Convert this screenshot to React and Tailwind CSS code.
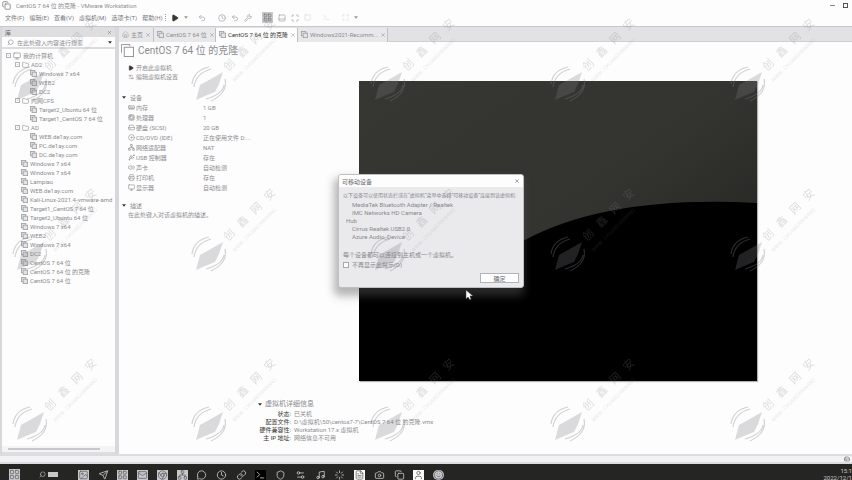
import React from "react";
import {
  Search, Monitor, Copy, Play, Clock, Undo2, Wrench, Square, Maximize, Cpu, HardDrive, Disc,
  Network, Usb, Volume2, Printer, Settings2, MemoryStick, X, House, Folder, Shield, Mail,
  MessageCircle, Image, Terminal, Chrome, Music, LayoutGrid, Camera, User, Smile, Loader,
  FileText, Send, PanelBottom, Link,
} from "lucide-react";

const tree = [
  ["root", "我的计算机"],
  ["folder", "AD2"],
  ["child", "Windows 7 x64"],
  ["child", "WEB2"],
  ["child", "DC2"],
  ["folder", "内网CFS"],
  ["child", "Target2_Ubuntu 64 位"],
  ["child", "Target1_CentOS 7 64 位"],
  ["folder", "AD"],
  ["child", "WEB.de1ay.com"],
  ["child", "PC.de1ay.com"],
  ["child", "DC.de1ay.com"],
  ["vm", "Windows 7 x64"],
  ["vm", "Windows 7 x64"],
  ["vm", "Lampiao"],
  ["vm", "WEB.de1ay.com"],
  ["vm", "Kali-Linux-2021.4-vmware-amd"],
  ["vm", "Target1_CentOS 7 64 位"],
  ["vm", "Target2_Ubuntu 64 位"],
  ["vm", "Windows 7 x64"],
  ["vm", "WEB2"],
  ["vm", "Windows 7 x64"],
  ["vm", "DC2"],
  ["vm", "CentOS 7 64 位"],
  ["vm", "CentOS 7 64 位 的克隆"],
  ["vm", "CentOS 7 64 位"],
];

const indent = { root: "pl-[4px]", folder: "pl-[13px]", child: "pl-[28px]", vm: "pl-[19px]" };

const devices = [
  [MemoryStick, "内存", "1 GB"],
  [Cpu, "处理器", "1"],
  [HardDrive, "硬盘 (SCSI)", "20 GB"],
  [Disc, "CD/DVD (IDE)", "正在使用文件 D:..."],
  [Network, "网络适配器", "NAT"],
  [Usb, "USB 控制器", "存在"],
  [Volume2, "声卡", "自动检测"],
  [Printer, "打印机", "存在"],
  [Monitor, "显示器", "自动检测"],
];

const details = [
  ["状态:", "已关机"],
  ["配置文件:", "D:\\虚拟机\\50\\centos7-7\\CentOS 7 64 位 的克隆.vmx"],
  ["硬件兼容性:", "Workstation 17.x 虚拟机"],
  ["主 IP 地址:", "网络信息不可用"],
];

const apps = [
  [Image, "bg-[#c8c8cc]"], [Send, ""], [LayoutGrid, "bg-[#c8c8cc]"], [Mail, "bg-[#c8c8cc]"],
  [Chrome, "bg-[#c8c8cc]"], [Network, "bg-[#c8c8cc]"], [MessageCircle, ""], [Clock, ""],
  [Link, ""], [Terminal, "bg-black"], [Shield, ""], [Settings2, ""], [Music, ""],
  [Loader, ""], [FileText, "bg-[#fdfdfd]"], [Camera, ""], [Copy, ""], [User, "bg-[#fdfdfd]"],
  [Smile, "bg-[#c8c8cc] rounded-full"],
];

function Caret() {
  return (
    <svg viewBox="0 0 6 4" className="h-[3px] w-[4px] shrink-0 fill-[#363632]">
      <path d="M0 0h6L3 4z" />
    </svg>
  );
}

function VmIcon() {
  return (
    <svg viewBox="0 0 8 8" className="h-[7px] w-[7px] shrink-0" fill="#e4e4e6" stroke="#a4a4a8">
      <rect x=".5" y=".5" width="5" height="5" />
      <rect x="2.5" y="2.5" width="5" height="5" />
    </svg>
  );
}

function Watermark({ x, y }) {
  return (
    <g transform={`translate(${x} ${y})`} fill="#808084" stroke="none">
      <path d="M-13 15L-9 0 0-5 14-13 10-1 6 7-4 11z" opacity=".8" />
      <path d="M-17-1Q-15-15 0-18M-15 2Q-13-12 2-16M16-6Q19 8 2 16M15 0Q14 9-3 14" fill="none" stroke="#808084" strokeWidth="1.2" />
      <g transform="rotate(-45)" fontFamily="'Noto Sans CJK SC', sans-serif" opacity=".75">
        <text x="23" y="4" fontSize="11">创</text>
        <text x="42" y="4" fontSize="11">鑫</text>
        <text x="61" y="4" fontSize="11">网</text>
        <text x="80" y="4" fontSize="11">安</text>
        <text x="20" y="16" fontSize="5" opacity=".7">WWW . CHUANGXINWANG</text>
      </g>
    </g>
  );
}

function Tab({ icon: Icon, label, active, width }) {
  return (
    <div className={`flex h-[14px] items-center gap-[2px] border-r border-[#c0c0c4] px-[3px] whitespace-nowrap ${width} ${active ? "bg-[#fdfdfd] text-[#363632]" : "bg-[#e8e8ea] text-[#8c8c90]"}`}>
      <Icon className="h-[7px] w-[7px] shrink-0 text-[#a0a0a4]" />
      <button className="flex-1 text-left">{label}</button>
      <button aria-label="关闭标签"><X className="h-[6px] w-[6px] text-[#909094]" /></button>
    </div>
  );
}

function Dialog() {
  return (
    <section role="dialog" aria-label="可移动设备" className="absolute left-[338px] top-[174px] h-[114px] w-[186px] overflow-hidden rounded-[3px] border border-[#c0c0c4] bg-[#eaeaec] text-[#88888c] shadow-[-2px_6px_8px_2px_rgba(90,90,96,0.45)]">
      <header className="flex h-[12px] items-center justify-between bg-[#fdfdfd] px-[3px] text-[#66666a]">
        <h2>可移动设备</h2>
        <button aria-label="关闭"><X className="h-[6px] w-[6px] text-[#555]" /></button>
      </header>
      <div className="px-[4px] pt-[4px] leading-[8px] whitespace-nowrap">
        <p className="text-[5px]">以下设备可以使用状态栏或在“虚拟机”菜单中选择“可移动设备”连接到该虚拟机:</p>
        <ul className="pt-[2px] pl-[9px] leading-[8px]">
          <li>MediaTek Bluetooth Adapter / Realtek</li>
          <li>IMC Networks HD Camera</li>
          <li className="-ml-[6px]">Hub</li>
          <li>Cirrus Realtek USB2.0</li>
          <li>Azure Audio_Device</li>
        </ul>
        <p className="pt-[10px]">每个设备都可以连接到主机或一个虚拟机。</p>
        <label className="mt-[2px] flex items-center gap-[3px]">
          <input type="checkbox" className="h-[6px] w-[6px] appearance-none border border-[#a8a8ac] bg-[#fdfdfd]" />
          不再显示此提示(D)
        </label>
      </div>
      <button className="absolute right-[4px] bottom-[4px] flex h-[10px] w-[39px] items-center justify-center border border-[#b4b4b8] bg-[#fdfdfd] text-[#66666a]">确定</button>
    </section>
  );
}

export default function App() {
  return (
    <div className="relative flex h-screen w-full flex-col overflow-hidden bg-[#fdfdfd] font-[Roboto,'Noto_Sans_CJK_SC',sans-serif] text-[6px] leading-[9px] text-[#8c8c90]">
      <header className="flex h-[11px] shrink-0 items-center gap-[5px] pr-[4px] pl-[2px]">
        <Copy className="h-[9px] w-[9px] text-[#77777b]" />
        <h1 className="flex-1">CentOS 7 64 位 的克隆 - VMware Workstation</h1>
        <button aria-label="最小化" className="w-[5px] border-t border-[#88888c]" />
        <button aria-label="还原" className="ml-[3px] h-[5px] w-[5px] border border-[#555]" />
      </header>

      <nav className="flex h-[16px] shrink-0 items-center border-b border-[#c8c8cc] pb-[2px] pl-[5px] text-[#77777b]">
        <div className="flex w-[160px] items-center gap-[5px] whitespace-nowrap">
          <button>文件(F)</button>
          <button>编辑(E)</button>
          <button>查看(V)</button>
          <button>虚拟机(M)</button>
          <button>选项卡(T)</button>
          <button>帮助(H)</button>
        </div>
        <div className="flex items-center gap-[5px] text-[#a0a0a4]">
          <span className="h-[7px] border-l border-dotted border-[#a0a0a4]" />
          <button aria-label="开启"><Play className="h-[8px] w-[8px] fill-[#363632] text-[#363632]" /></button>
          <span className="opacity-50"><Caret /></span>
          <button aria-label="发送按键" className="ml-[5px]"><Undo2 className="h-[8px] w-[8px]" /></button>
          <button aria-label="快照" className="ml-[7px]"><Clock className="h-[8px] w-[8px]" /></button>
          <button aria-label="恢复"><Undo2 className="h-[8px] w-[8px]" /></button>
          <button aria-label="管理"><Wrench className="h-[8px] w-[8px]" /></button>
          <button aria-label="显示库" className="ml-[5px] bg-[#c8c8cc] p-[1px] text-[#77777b]"><LayoutGrid className="h-[9px] w-[9px]" /></button>
          <button aria-label="缩略图"><PanelBottom className="h-[8px] w-[8px]" /></button>
          <button aria-label="全屏"><Maximize className="h-[8px] w-[8px]" /></button>
          <button aria-label="Unity"><Square className="h-[7px] w-[7px] text-[#d4d4d8]" /></button>
          <button aria-label="控制台" className="ml-[7px]"><Terminal className="h-[7px] w-[7px] text-[#d4d4d8]" /></button>
          <button aria-label="拉伸" className="ml-[7px]"><Maximize className="h-[7px] w-[7px] text-[#d4d4d8]" /></button>
          <span className="opacity-50"><Caret /></span>
        </div>
      </nav>

      <div className="flex min-h-0 flex-1">
        <aside className="flex w-[119px] shrink-0 flex-col border-r-4 border-l-2 border-[#d8d8dc]">
          <div className="flex h-[10px] items-center justify-between bg-[#dedee0] px-[3px] text-[#66666a]">
            <span>库</span>
            <button aria-label="关闭库"><X className="h-[5px] w-[5px]" /></button>
          </div>
          <label className="flex h-[12px] items-center gap-[3px] border-b-2 border-[#dcdcde] px-[3px]">
            <Search className="ml-[2px] h-[7px] w-[7px] -scale-x-100" />
            <input aria-label="搜索" placeholder="在此处键入内容进行搜索" className="min-w-0 flex-1 bg-transparent placeholder:text-[#8c8c90]" />
            <Caret />
          </label>
          <ul className="flex-1 overflow-hidden pt-[2px]">
            {tree.map(([kind, name], i) => (
              <li key={i} className={`flex h-[9px] items-center gap-[2px] whitespace-nowrap ${indent[kind]}`}>
                {kind === "root" || kind === "folder" ? (
                  <>
                    <span className="flex h-[5px] w-[5px] items-center justify-center border border-[#b4b4b8] text-[5px]">-</span>
                    {kind === "root" ? <Monitor className="h-[8px] w-[8px]" /> : <Folder className="h-[8px] w-[7px]" />}
                  </>
                ) : (
                  <VmIcon />
                )}
                <button className="whitespace-nowrap">{name}</button>
              </li>
            ))}
          </ul>
          <div className="flex h-[8px] items-start border-b-2 border-[#dedee0] bg-[#f4f4f6] px-[6px] pt-[2px]">
            <span className="h-[2px] w-[92px] bg-[#c8c8cc]" />
          </div>
        </aside>

        <main className="flex min-w-0 flex-1 flex-col">
          <div className="flex h-[15px] shrink-0 items-center border-b border-[#d0d0d4] bg-[#e2e2e4] pt-[1px]">
            <Tab icon={House} label="主页" width="w-[35px]" />
            <Tab icon={VmIcon} label="CentOS 7 64 位" width="w-[62px]" />
            <Tab icon={VmIcon} label="CentOS 7 64 位 的克隆" active width="w-[82px]" />
            <Tab icon={VmIcon} label="Windows2021-Recomm..." width="w-[90px]" />
          </div>
          <div className="flex min-h-0 flex-1">
            <section className="flex w-[137px] shrink-0 flex-col">
              <div className="flex h-[17px] items-center gap-[4px] pl-[2px] whitespace-nowrap">
                <svg viewBox="0 0 14 14" className="h-[13px] w-[13px] shrink-0" fill="#fdfdfd" stroke="#909094">
                  <path d="M.5 9.5v-9h9v2" />
                  <rect x="3.5" y="3.5" width="10" height="10" />
                </svg>
                <h2 className="text-[10px]">CentOS 7 64 位 的克隆</h2>
              </div>
              <div className="pt-[4px] pl-[9px]">
                <button className="flex items-center gap-[2px]"><Play className="h-[6px] w-[6px] fill-[#363632] text-[#363632]" />开启此虚拟机</button>
                <button className="flex items-center gap-[2px]"><Settings2 className="h-[6px] w-[6px]" />编辑虚拟机设置</button>
              </div>
              <h3 className="flex items-center gap-[4px] pt-[12px] pl-[3px] text-[6px]"><Caret />设备</h3>
              <dl className="pl-[9px]">
                {devices.map(([Icon, name, value]) => (
                  <div key={name} className="flex h-[10px] items-center gap-[1px] whitespace-nowrap">
                    <Icon className="h-[7px] w-[7px] shrink-0" />
                    <dt className="w-[66px]">{name}</dt>
                    <dd>{value}</dd>
                  </div>
                ))}
              </dl>
              <h3 className="flex items-center gap-[4px] pt-[9px] pl-[3px] text-[6px]"><Caret />描述</h3>
              <p className="pl-[9px] whitespace-nowrap">在此处键入对该虚拟机的描述。</p>
            </section>

            <section className="flex min-w-0 flex-1 flex-col pt-[39px]">
              <svg viewBox="0 0 398 300" className="ml-[8px] h-[300px] w-[398px] self-center bg-black shadow-[1px_1px_1px_#b4b4b8]">
                <defs>
                  <linearGradient id="sky" x1="0" y1="0" x2="1" y2="1">
                    <stop offset="0" stopColor="#363632" />
                    <stop offset=".5" stopColor="#333330" />
                    <stop offset="1" stopColor="#1e1e1c" />
                  </linearGradient>
                </defs>
                <path d="M0 0h398v122Q250 114 166 159Q80 198 0 280z" fill="url(#sky)" />
                <path d="M0 200h166v100H0z" />
              </svg>
              <div className="pt-[19px]">
                <h3 className="flex items-center gap-[3px] pl-[2px] text-[7px]"><Caret />虚拟机详细信息</h3>
                <dl>
                  {details.map(([name, value]) => (
                    <div key={name} className="flex h-[8px] items-center gap-[3px] whitespace-nowrap">
                      <dt className="w-[35px] text-right text-[#363632]">{name}</dt>
                      <dd>{value}</dd>
                    </div>
                  ))}
                </dl>
              </div>
            </section>
          </div>
        </main>
      </div>

      <div className="flex h-[10px] shrink-0 items-center justify-end border-y-2 border-[#dcdcde] bg-[#f2f2f4] pr-[2px]">
        <HardDrive className="h-[6px] w-[6px] text-[#555]" />
      </div>

      <footer className="flex h-[16px] shrink-0 items-center bg-[#252523] pt-[5px] pl-[9px] text-[#c8c8cc]">
        <button aria-label="开始" className="w-[30px]"><LayoutGrid className="h-[11px] w-[11px] bg-[#c8c8cc] text-[#77777b]" /></button>
        <button aria-label="搜索" className="w-[9px]"><Search className="h-[7px] w-[7px] -scale-x-100" /></button>
        <button aria-label="任务视图" className="mr-[20px] h-[5px] w-[10px] bg-[#c8c8cc]" />
        <div className="flex w-[366px] justify-between">
          {apps.map(([Icon, look], i) => (
            <button key={i} aria-label={`应用 ${i + 1}`} className="w-[11px]">
              <Icon className={`h-[10px] w-[11px] ${look} ${look.includes("bg-[") ? "text-[#66666a]" : "text-[#c8c8cc]"}`} />
            </button>
          ))}
        </div>
        <time className="ml-auto pb-[2px] text-right leading-[7px]">15:1<br />2022/12/1</time>
      </footer>

      <Dialog />

      <svg viewBox="0 0 852 480" className="pointer-events-none absolute inset-0 h-full w-full">
        <g opacity=".34">
          {[85, 255, 425].map((y) => [30, 209, 388, 568, 748].map((x) => <Watermark key={`${x}-${y}`} x={x} y={y} />))}
        </g>
        <path d="M466 290v9l2-2 2 3 1-1-1-3h3z" fill="#fdfdfd" stroke="#363632" strokeWidth=".5" />
      </svg>
    </div>
  );
}
